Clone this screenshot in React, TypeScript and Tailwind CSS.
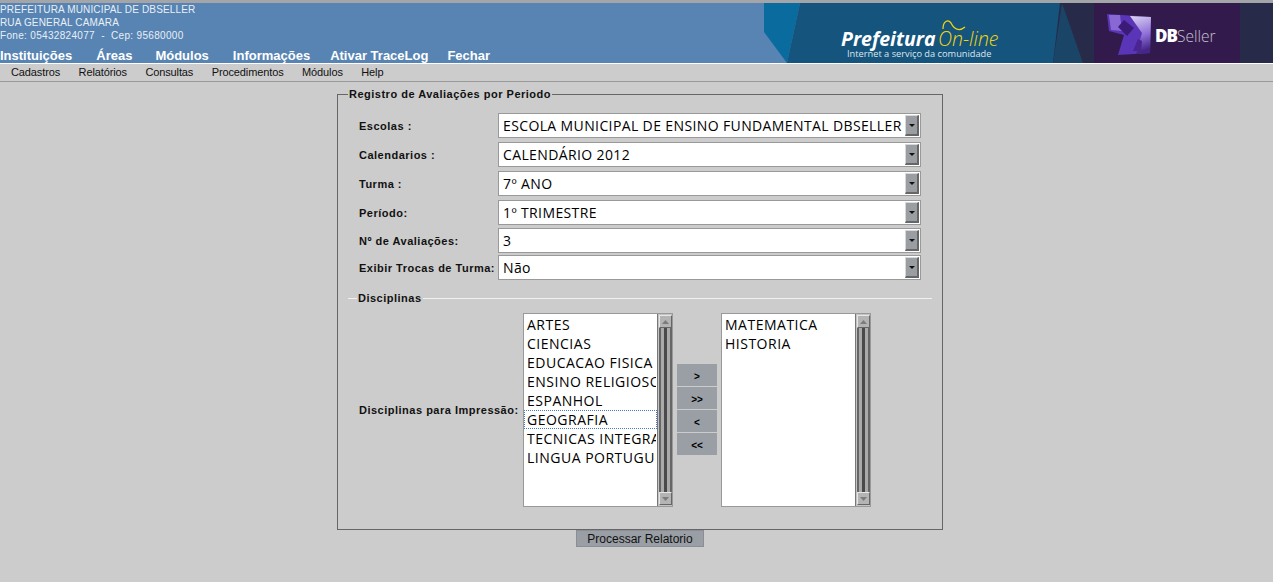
const SANS = "font-['Liberation_Sans',Arial,sans-serif]";

const topMenu = [
  { label: "Instituições", className: "mr-6" },
  { label: "Áreas", className: "mr-[23px]" },
  { label: "Módulos", className: "mr-6" },
  { label: "Informações", className: "mr-5" },
  { label: "Ativar TraceLog", className: "mr-[19px]" },
  { label: "Fechar", className: "" },
];
const subMenu = ["Cadastros", "Relatórios", "Consultas", "Procedimentos", "Módulos", "Help"];

function Banner() {
  return (
    <svg width="509" height="60" viewBox="0 0 509 60" className="block shrink-0">
      <defs>
        <linearGradient id="tile" x1="0" y1="0" x2="0.2" y2="1">
          <stop offset="0" stopColor="#dcd5f2" />
          <stop offset="0.6" stopColor="#8f6fd8" />
          <stop offset="1" stopColor="#452788" />
        </linearGradient>
      </defs>
      <rect x="289" width="220" height="60" fill="#272b49" />
      <polygon points="0,0 36,0 23,60 0,29" fill="#0a6b9e" />
      <polygon points="36,0 296,0 289,60 23,60" fill="#14547d" />
      <polygon points="298,0 319,60 289,60" fill="#1b4566" />
      <rect x="330" width="146" height="60" fill="#331a4d" />
      {/* prefeitura logo */}
      <text x="77" y="43" fontFamily="'Open Sans',sans-serif" fontWeight="700" fontStyle="italic" fontSize="19.5" fill="#ffffff">Prefeitura</text>
      <text x="174" y="43" fontFamily="'Open Sans',sans-serif" fontWeight="300" fontStyle="italic" fontSize="19.5" fill="#f2d40f">On-line</text>
      <path d="M179 26 C179 18 184 16 187 20 C190 26 195 29 201 24" fill="none" stroke="#f2d40f" strokeWidth="1.3" />
      <text x="83" y="54" fontFamily="'Open Sans',sans-serif" fontSize="9.25" fill="#dfe6ec">Internet a serviço da comunidade</text>
      {/* dbseller logo */}
      <polygon points="343,11 387,14 386,50 354,52 360,32 345,28" fill="#5b35b8" />
      <polygon points="366,13 387,14 386,50 372,51 378,30" fill="url(#tile)" />
      <polygon points="345,12 356,12 358,28 347,27" fill="#8a68d4" />
      <polygon points="360,17 370,25 363,33 354,24" fill="#3c1a78" />
      <polygon points="369,48 374,36 378,38 377,48" fill="#4a2490" />
      <text x="391" y="39" fontFamily="'Open Sans',sans-serif" fontWeight="800" fontSize="17" letterSpacing="-1" fill="#ffffff">DB</text>
      <text x="413" y="39" fontFamily="'Open Sans',sans-serif" fontWeight="300" fontSize="15.5" fill="#c5c3cf">Seller</text>
    </svg>
  );
}

function ComboRow({ label, value, className }: { label: string; value: string; className?: string }) {
  return (
    <div className={`flex items-center h-[25px] ${className ?? ""}`}>
      <div className="w-[139px] pt-[2px] text-[11px] font-bold text-[#111] tracking-[0.5px] whitespace-nowrap">{label}</div>
      <div className="flex items-center w-[423px] h-full bg-white border border-[#999] pl-1">
        <span className="flex-1 text-[14px] tracking-[0.38px] text-black font-['Open_Sans',sans-serif] whitespace-nowrap overflow-hidden">{value}</span>
        <div className="flex items-center justify-center w-[14px] h-[21px] mr-px bg-[#9a9ea3] border-t border-l border-[#d8d8d8] border-r-2 border-b-2 border-r-[#666] border-b-[#666]">
          <svg width="6" height="3" viewBox="0 0 6 3"><polygon points="0,0 6,0 3,3" fill="#111" /></svg>
        </div>
      </div>
    </div>
  );
}

function ScrollArrow({ up }: { up: boolean }) {
  return (
    <div className="flex items-center justify-center w-[13px] h-[13px] bg-[#b4b4b4] border-t border-l border-[#e6e6e6] border-r border-b border-r-[#666] border-b-[#666]">
      <svg width="7" height="4" viewBox="0 0 7 4">
        <polygon points={up ? "0,4 7,4 3.5,0" : "0,0 7,0 3.5,4"} fill="#7c7c7c" />
      </svg>
    </div>
  );
}

function ListBox({ items, selected }: { items: string[]; selected?: string }) {
  return (
    <div className="flex w-[150px] h-[194px] bg-white border border-[#999]">
      <div className="w-[133px] pt-[1px] overflow-hidden">
        {items.map((item) => (
          <div
            key={item}
            className={`h-[19px] pl-[2px] leading-[18px] text-[14px] tracking-[0.5px] text-black font-['Open_Sans',sans-serif] whitespace-nowrap overflow-hidden border border-dotted ${
              item === selected ? "border-[#4a78c8]" : "border-transparent"
            }`}
          >
            {item}
          </div>
        ))}
      </div>
      <div className="flex flex-col items-center w-[15px] py-px bg-[#c4c4c4] border-l border-[#777]">
        <ScrollArrow up />
        <div className="flex flex-1 justify-center w-[13px] bg-[#aaa] border-x-2 border-[#666]">
          <div className="w-[3px] bg-[#4a4a4a]" />
        </div>
        <ScrollArrow up={false} />
      </div>
    </div>
  );
}

function MoveButton({ label }: { label: string }) {
  return (
    <button className="w-[40px] h-[22px] pt-[3px] bg-[#9a9fa6] text-[10px] font-bold text-black leading-none">{label}</button>
  );
}

export default function App() {
  const left = [
    "ARTES",
    "CIENCIAS",
    "EDUCACAO FISICA",
    "ENSINO RELIGIOSO",
    "ESPANHOL",
    "GEOGRAFIA",
    "TECNICAS INTEGRADAS",
    "LINGUA PORTUGUESA",
  ];

  return (
    <div className={`h-[582px] overflow-hidden bg-[#cccccc] ${SANS}`}>
      <div className="h-[3px] bg-[#a3a5a8]" />

      {/* header */}
      <div className="flex h-[60px] bg-[#5784b2]">
        <div className="flex-1 flex flex-col">
          <div className="text-[10px] leading-[13px] tracking-[0.15px] text-[#e9eff6]">
            <div>PREFEITURA MUNICIPAL DE DBSELLER</div>
            <div>RUA GENERAL CAMARA</div>
            <div className="tracking-[0.32px]">Fone: 05432824077&nbsp; -&nbsp; Cep: 95680000</div>
          </div>
          <div className="flex mt-[7px] text-[13px] font-bold text-white leading-[14px]">
            {topMenu.map((m) => (
              <span key={m.label} className={m.className}>{m.label}</span>
            ))}
          </div>
        </div>
        <Banner />
      </div>

      {/* sub menu */}
      <div className="flex gap-[18.5px] h-[19px] pl-[11px] items-center border-t border-white border-b border-b-[#999] text-[11px] tracking-[-0.12px] text-[#111]">
        {subMenu.map((m) => (
          <span key={m}>{m}</span>
        ))}
      </div>

      {/* form */}
      <fieldset className="w-[605px] h-[443px] ml-[337px] mt-[5px] px-[21px] border border-[#666]">
        <legend className="-ml-[11px] px-[1px] text-[11px] font-bold text-[#111] tracking-[0.5px] leading-[14px]">
          Registro de Avaliações por Periodo
        </legend>

        <div className="flex flex-col gap-1 mt-[12px]">
          <ComboRow label="Escolas :" value="ESCOLA MUNICIPAL DE ENSINO FUNDAMENTAL DBSELLER" />
          <ComboRow label="Calendarios :" value="CALENDÁRIO 2012" />
          <ComboRow label="Turma :" value="7º ANO" />
          <ComboRow label="Período:" value="1º TRIMESTRE" />
          <ComboRow label="Nº de Avaliações:" value="3" className="-mt-px" />
          <ComboRow label="Exibir Trocas de Turma:" value="Não" className="-mt-[2px]" />
        </div>

        <fieldset className="-mx-[11px] mt-[11px] border-t border-[#f0f0f0]">
          <legend className="ml-[9px] px-[1px] text-[11px] font-bold text-[#111] tracking-[0.5px] leading-[14px]">
            Disciplinas
          </legend>
          <div className="flex items-center mt-[8px] pl-[11px]">
            <div className="w-[164px] text-[11px] font-bold text-[#111] tracking-[0.5px] whitespace-nowrap">Disciplinas para Impressão:</div>
            <ListBox items={left} selected="GEOGRAFIA" />
            <div className="flex flex-col gap-px mx-1 -mt-[1px]">
              <MoveButton label=">" />
              <MoveButton label=">>" />
              <MoveButton label="<" />
              <MoveButton label="<<" />
            </div>
            <ListBox items={["MATEMATICA", "HISTORIA"]} />
          </div>
        </fieldset>
      </fieldset>

      <div className="flex ml-[576px]">
        <button className="w-[128px] h-[17px] bg-[#9a9fa6] border border-[#8b8f95] text-[12px] leading-none text-[#111]">
          Processar Relatorio
        </button>
      </div>
    </div>
  );
}
